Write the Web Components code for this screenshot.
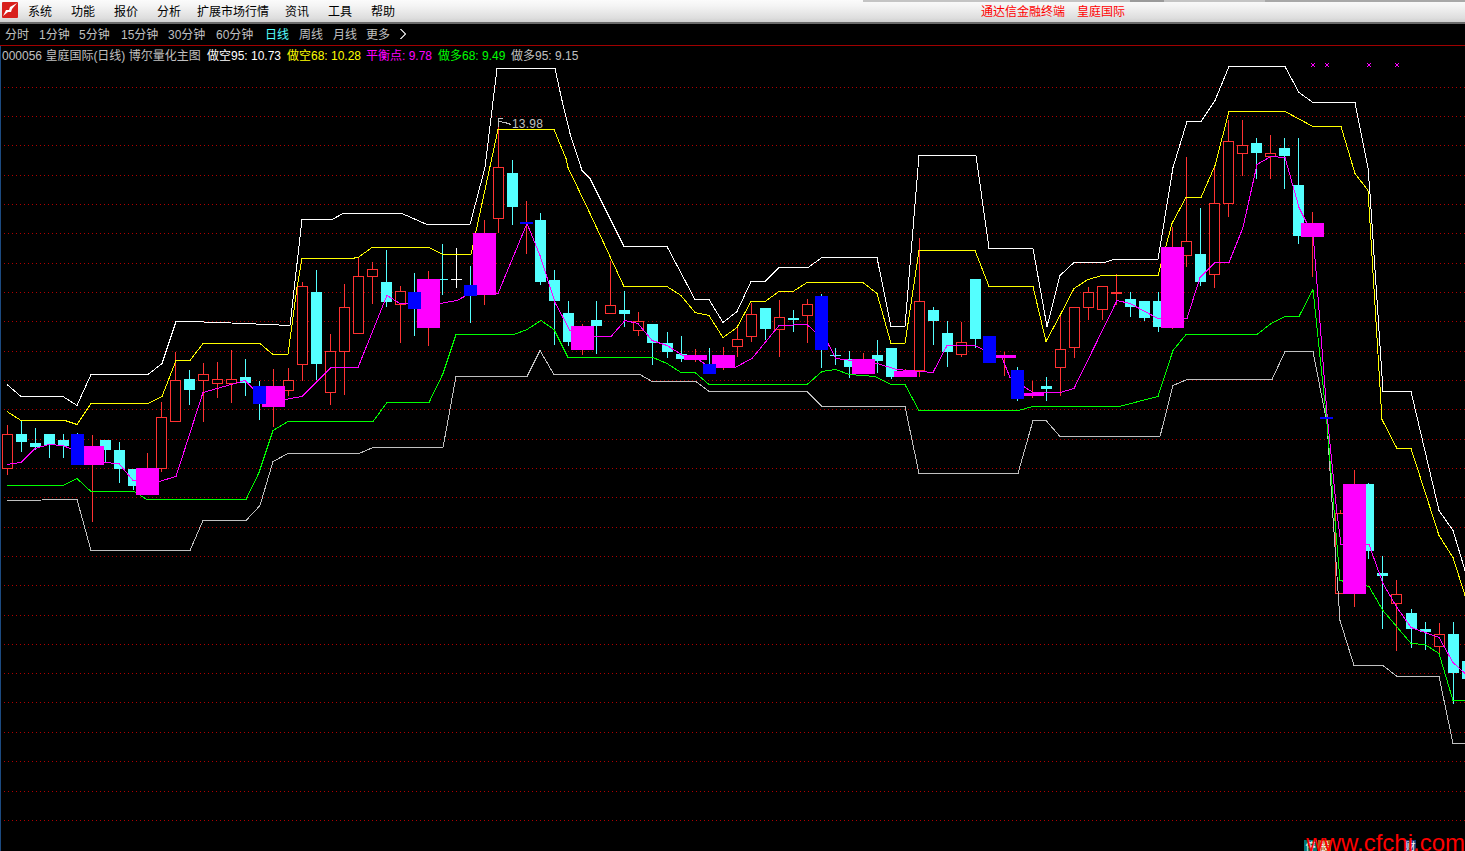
<!DOCTYPE html>
<html lang="en">
  <head>
    <meta charset="UTF-8">
    <title>皇庭国际 日线</title>
    <style>
      html, body { margin: 0; height: 100%; background: #000; overflow: hidden; }
    </style>
  </head>
  <body>
    <tdx-app>
      <tdx-menubar title-text="通达信金融终端" stock="皇庭国际">
        <tdx-menu-item w="24" gap="19">系统</tdx-menu-item>
        <tdx-menu-item w="24" gap="19">功能</tdx-menu-item>
        <tdx-menu-item w="24" gap="19">报价</tdx-menu-item>
        <tdx-menu-item w="24" gap="16">分析</tdx-menu-item>
        <tdx-menu-item w="72" gap="16">扩展市场行情</tdx-menu-item>
        <tdx-menu-item w="24" gap="19">资讯</tdx-menu-item>
        <tdx-menu-item w="24" gap="19">工具</tdx-menu-item>
        <tdx-menu-item w="24" gap="0">帮助</tdx-menu-item>
      </tdx-menubar>
      <tdx-periodbar>
        <tdx-period w="34">分时</tdx-period>
        <tdx-period w="40">1分钟</tdx-period>
        <tdx-period w="42">5分钟</tdx-period>
        <tdx-period w="47">15分钟</tdx-period>
        <tdx-period w="48">30分钟</tdx-period>
        <tdx-period w="49">60分钟</tdx-period>
        <tdx-period w="34" active>日线</tdx-period>
        <tdx-period w="34">周线</tdx-period>
        <tdx-period w="33">月线</tdx-period>
        <tdx-period w="34">更多</tdx-period>
        <tdx-period w="10"><svg width="7" height="12" viewBox="0 0 7 12" style="display:block" shape-rendering="crispEdges"><path d="M0.5 1L5.5 6L0.5 11" fill="none" stroke="#c0c0c0"/></svg></tdx-period>
      </tdx-periodbar>
      <tdx-chart>
        <tdx-legend slot="legend" color="#c0c0c0" w="205">000056 皇庭国际(日线) 博尔量化主图</tdx-legend>
        <tdx-legend slot="legend" color="#ffffff" w="80">做空95: 10.73</tdx-legend>
        <tdx-legend slot="legend" color="#ffff00" w="79">做空68: 10.28</tdx-legend>
        <tdx-legend slot="legend" color="#ff00ff" w="72">平衡点: 9.78</tdx-legend>
        <tdx-legend slot="legend" color="#00ff00" w="73">做多68: 9.49</tdx-legend>
        <tdx-legend slot="legend" color="#c0c0c0" w="80">做多95: 9.15</tdx-legend>
      </tdx-chart>
    </tdx-app>

    <script>
      const CJK = '"Liberation Sans", "Noto Sans CJK SC", sans-serif';

      class TdxApp extends HTMLElement {
        constructor() {
          super();
          this.attachShadow({ mode: 'open' });
          this.shadowRoot.innerHTML = `
            <style>
              :host { display: flex; flex-direction: column; width: 1465px; height: 851px; background: #000; overflow: hidden; position: relative; font: 12px ${CJK}; }
              .mark { position: absolute; right: 0; top: 834px; height: 17px; color: #ff0000; font: 24px/17px "Liberation Sans", sans-serif; white-space: nowrap; }
              .flag { position: absolute; top: 840px; height: 11px; color: #fff; font: 10px/11px "Noto Sans CJK SC", sans-serif; text-align: center; }
            </style>
            <slot></slot>
            <div class="flag" style="left:1304px;width:13px;background:#007a7a">停</div>
            <div class="flag" style="left:1318px;width:13px;background:#a85a10">股</div>
            <div class="flag" style="left:1405px;width:11px;background:#103c78">财</div>
            <div class="mark">www.cfchi.com</div>
          `;
        }
      }
      customElements.define('tdx-app', TdxApp);

      class TdxMenubar extends HTMLElement {
        constructor() {
          super();
          this.attachShadow({ mode: 'open' });
          this.shadowRoot.innerHTML = `
            <style>
              :host { display: block; flex: none; height: 24px; box-sizing: border-box; position: relative; border-bottom: 2px solid #6a6a6a;
                background: linear-gradient(#fbfbfb 0, #f4f4f4 6px, #dedede 18px, #cfcfcf 22px); font: 12px ${CJK}; }
              .row { display: flex; align-items: center; height: 20px; padding-left: 28px; color: #000; }
              .logo { position: absolute; left: 2px; top: 2px; width: 16px; height: 16px; }
              .right { flex: 1; display: flex; justify-content: flex-start; color: #ff0000; padding-left: 586px; gap: 12px; }
              .tab { position: absolute; top: 0; height: 2px; }
            </style>
            <svg class="logo" viewBox="0 0 16 16">
              <rect width="16" height="16" rx="1" fill="#d8201c"/>
              <path d="M15 1 L8 5 L7 8 L4 8 L1 14 L6 10 L9 10 L10 7 Z" fill="#ffffff"/>
            </svg>
            <div class="tab" style="left:863px;width:602px;background:#c4c4c4"></div>
            <div class="tab" style="left:1130px;width:34px;background:#9a9a9a"></div>
            <div class="tab" style="left:1265px;width:200px;background:#a8a8a8"></div>
            <div class="row">
              <slot></slot>
              <div class="right"><span id="t"></span><span id="s"></span></div>
            </div>
          `;
          this.shadowRoot.getElementById('t').textContent = this.getAttribute('title-text');
          this.shadowRoot.getElementById('s').textContent = this.getAttribute('stock');
        }
      }
      customElements.define('tdx-menubar', TdxMenubar);

      class TdxMenuItem extends HTMLElement {
        constructor() {
          super();
          this.attachShadow({ mode: 'open' });
          this.shadowRoot.innerHTML = `<style>:host { display: block; flex: none; white-space: nowrap; }</style><slot></slot>`;
        }
        connectedCallback() {
          this.style.width = this.getAttribute('w') + 'px';
          this.style.marginRight = this.getAttribute('gap') + 'px';
        }
      }
      customElements.define('tdx-menu-item', TdxMenuItem);

      class TdxPeriodbar extends HTMLElement {
        constructor() {
          super();
          this.attachShadow({ mode: 'open' });
          this.shadowRoot.innerHTML = `
            <style>
              :host { display: flex; flex: none; align-items: center; height: 21px; box-sizing: border-box; padding: 0 0 2px 5px; background: #000; color: #c0c0c0; font: 12px ${CJK}; }
            </style>
            <slot></slot>
          `;
        }
      }
      customElements.define('tdx-periodbar', TdxPeriodbar);

      class TdxPeriod extends HTMLElement {
        constructor() {
          super();
          this.attachShadow({ mode: 'open' });
          this.shadowRoot.innerHTML = `<style>:host { display: block; flex: none; white-space: nowrap; } :host([active]) { color: #54ffff; }</style><slot></slot>`;
        }
        connectedCallback() { this.style.width = this.getAttribute('w') + 'px'; }
      }
      customElements.define('tdx-period', TdxPeriod);

      class TdxLegend extends HTMLElement {
        constructor() {
          super();
          this.attachShadow({ mode: 'open' });
          this.shadowRoot.innerHTML = `<style>:host { display: block; flex: none; white-space: nowrap; }</style><slot></slot>`;
        }
        connectedCallback() {
          this.style.color = this.getAttribute('color');
          this.style.width = this.getAttribute('w') + 'px';
        }
      }
      customElements.define('tdx-legend', TdxLegend);

      // candles: [kind, left, bodyTop, bodyBottom, wickTop, wickBottom]
      // r = hollow red, c = filled cyan, m = wide magenta, b = blue, w = white cross
      const CANDLES = [
        ['r',2,434,469,425,475],['c',16,434,442,420,452],['c',30,443,447,428,450],['c',44,434,445,434,458],
        ['c',58,440,446,434,458],['b',71,434,465,433,465],['m',81,446,465,435,522],['c',100,440,450,440,463],
        ['c',114,450,469,442,483],['c',128,469,486,469,490],['m',136,468,495,453,495],['r',156,417,469,402,472],
        ['r',170,380,422,352,422],['c',184,379,390,370,405],['r',198,374,381,363,422],['r',212,379,384,362,398],
        ['r',226,379,384,350,403],['c',240,377,383,359,396],['b',253,386,404,381,420],['m',262,386,407,369,427],
        ['r',283,380,391,368,396],['r',297,286,365,282,381],['c',311,292,364,270,380],['r',325,351,393,334,405],
        ['r',339,307,352,284,395],['r',353,276,334,258,334],['r',367,269,277,262,304],['c',381,282,302,250,307],
        ['r',395,291,305,286,343],['b',408,292,309,273,336],['m',417,279,328,271,346],['c',437,279,280,244,295],
        ['w',451,279,280,248,288],['b',464,285,296,266,323],['m',473,233,295,220,305],['r',493,167,219,120,233],
        ['c',507,173,207,160,225],['b',520,222,224,201,254],['c',535,220,282,213,285],['c',549,280,301,270,345],
        ['c',563,313,342,301,346],['m',571,326,350,324,355],['c',591,320,326,301,354],['r',605,305,314,261,314],
        ['c',619,310,314,291,327],['r',633,321,331,312,336],['c',647,324,343,324,365],['c',662,343,352,332,358],
        ['c',676,354,359,336,362],['m',684,355,360,349,362],['b',703,364,374,348,374],['m',712,355,368,347,370],
        ['r',732,339,347,327,357],['r',746,314,337,303,342],['c',760,308,329,308,340],['r',774,317,330,300,357],
        ['c',788,318,320,310,332],['r',802,304,316,299,343],['b',815,296,350,294,368],['c',830,355,356,348,365],
        ['c',844,359,367,351,378],['m',852,359,374,353,374],['c',872,355,361,340,373],['c',886,348,377,348,379],
        ['m',894,371,377,369,377],['r',914,301,371,238,377],['c',928,310,321,307,345],['c',942,333,352,321,367],
        ['r',956,342,355,322,357],['c',970,279,339,279,348],['b',983,336,363,336,363],['m',993,355,358,352,376],
        ['b',1011,370,399,367,401],['m',1021,393,396,381,398],['c',1041,386,389,377,401],['r',1055,349,368,316,396],
        ['r',1069,307,348,307,358],['r',1083,292,308,287,320],['r',1097,286,310,286,320],['r',1111,292,294,274,305],
        ['c',1125,299,307,292,317],['c',1139,301,318,301,321],['c',1153,301,327,292,332],['m',1161,247,328,227,329],
        ['r',1181,241,256,157,267],['c',1195,254,282,208,286],['r',1209,203,275,165,288],['r',1223,141,204,120,217],
        ['r',1237,145,154,120,176],['c',1251,143,153,138,179],['r',1265,153,157,135,179],['c',1279,148,156,138,189],
        ['c',1293,185,236,138,244],['m',1301,223,237,212,277],['b',1320,417,419,417,419],['r',1335,513,594,510,594],
        ['m',1343,484,594,470,607],['c',1363,484,551,483,559],['c',1377,573,576,556,629],['r',1391,594,604,580,651],
        ['c',1406,613,629,609,648],['c',1420,629,632,622,650],['r',1434,634,647,623,657],['c',1448,634,673,622,704],
        ['c',1462,661,679,661,685]
      ];

      const LINES = {
        upper95: { color: '#ffffff', pts: [7,384,21,396,63,396,77,405,91,374,148,374,162,363,176,321,190,321,245,323,290,325,302,219,332,219,343,213,402,213,427,224,470,224,485,167,497,68,555,68,562,100,570,133,582,170,590,178,624,246,667,246,695,299,709,299,723,322,737,311,751,281,765,281,779,267,808,267,822,257,877,257,891,326,905,326,919,155,976,155,989,248,1033,248,1047,326,1060,275,1074,262,1105,262,1113,259,1158,259,1173,167,1187,121,1201,121,1215,100,1229,66,1285,66,1299,92,1313,102,1355,102,1368,167,1370,193,1383,391,1411,391,1439,510,1453,530,1465,570] },
        upper68: { color: '#ffff00', pts: [7,411,21,420,65,420,77,424,91,403,148,403,162,396,176,360,190,360,203,343,260,343,273,354,288,354,297,287,302,258,351,258,358,257,372,247,429,247,443,254,471,254,498,129,554,129,566,158,568,167,590,213,624,286,667,286,681,295,695,312,709,315,723,337,737,327,751,301,765,301,779,291,793,291,807,282,863,282,877,293,891,343,905,343,919,250,975,250,989,286,1033,286,1046,341,1060,315,1074,288,1088,279,1102,275,1158,275,1172,223,1186,197,1201,197,1215,165,1229,111,1285,111,1313,126,1341,126,1355,173,1368,190,1382,419,1397,448,1411,448,1439,535,1453,557,1465,595] },
        mid: { color: '#ff00ff', pts: [7,464,21,462,35,448,49,444,63,445,77,451,103,462,119,463,133,480,159,481,176,476,203,392,245,380,254,389,285,399,302,396,313,385,331,367,358,367,387,295,400,303,440,303,457,300,470,293,498,293,527,223,540,255,555,302,570,330,590,336,611,336,625,320,638,323,652,340,667,345,683,355,697,358,710,367,735,367,752,358,779,325,807,324,828,343,836,358,877,363,897,369,933,372,947,345,975,345,983,349,1002,357,1010,377,1033,392,1060,392,1074,388,1117,300,1130,303,1158,318,1187,318,1200,277,1215,262,1229,262,1243,227,1257,164,1271,156,1285,157,1299,207,1307,223,1313,232,1327,413,1337,513,1341,544,1369,544,1383,583,1397,607,1411,627,1439,637,1453,662,1465,673] },
        lower68: { color: '#00ff00', pts: [7,485,63,485,77,478,91,491,134,491,147,499,246,499,259,472,273,430,288,421,373,421,387,402,429,402,443,373,456,334,514,334,527,329,541,320,554,329,568,357,653,357,667,363,681,372,695,372,709,384,807,384,822,371,836,369,849,374,875,376,891,384,905,384,919,410,1018,410,1033,406,1119,406,1158,396,1173,350,1186,334,1257,334,1271,323,1285,316,1299,316,1313,289,1327,423,1333,497,1340,580,1369,586,1383,610,1411,643,1425,644,1439,653,1453,700,1465,700] },
        lower95: { color: '#c0c0c0', pts: [7,500,77,499,91,550,190,550,203,520,246,520,260,505,273,461,288,453,359,453,373,447,443,447,456,376,527,376,540,350,554,374,640,374,652,381,696,381,709,391,807,391,822,406,905,406,919,473,1018,473,1033,420,1046,420,1060,436,1160,436,1173,385,1187,379,1272,379,1285,351,1313,351,1327,423,1333,517,1340,620,1354,665,1383,665,1397,676,1439,676,1453,743,1465,743] }
      };

      const GRID = [87,116,145,175,204,233,263,292,321,351,380,409,439,468,497,527,556,585,615,644,673,702,732,761,791,820];
      const CROSSES = [1313,1327,1369,1397];

      function rect(x, y, w, h, fill) {
        return `<rect x="${x}" y="${y}" width="${w}" height="${h}" fill="${fill}"/>`;
      }
      function vline(x, y1, y2, color) {
        return y2 > y1 ? rect(x, y1, 1, y2 - y1, color) : '';
      }

      class TdxChart extends HTMLElement {
        constructor() {
          super();
          this.attachShadow({ mode: 'open' });
          this.shadowRoot.innerHTML = `
            <style>
              :host { display: block; flex: 1; position: relative; background: #000; border-top: 1px solid #a00000; box-sizing: border-box; font: 12px ${CJK}; }
              .legend { display: flex; align-items: center; height: 16px; padding-left: 2px; position: relative; }
              svg { position: absolute; left: 0; top: -46px; width: 1465px; height: 851px; }
              .edge { position: absolute; left: 0; top: 0; bottom: 0; width: 1px; background: #1c4a80; }
              .hi { position: absolute; left: 512px; top: 71px; color: #c0c0c0; font: 12px "Liberation Sans", sans-serif; letter-spacing: .2px; }
            </style>
            <svg id="plot" viewBox="0 0 1465 851" shape-rendering="crispEdges"></svg>
            <div class="legend"><slot name="legend"></slot></div>
            <div class="hi">13.98</div>
            <div class="edge"></div>
          `;
          this.shadowRoot.getElementById('plot').innerHTML = this.plot();
        }

        plot() {
          let out = '';
          // dotted price grid
          for (const y of GRID) {
            out += `<line x1="0" x2="1465" y1="${y + .5}" y2="${y + .5}" stroke="#b00000" stroke-dasharray="1 3"/>`;
          }
          // plain candles go under the band lines, the wide boxes over them
          let over = '';
          for (const [k, l, t, b, wt, wb] of CANDLES) {
            if (k == 'r') {
              out += vline(l + 5, wt, t, '#ff3232') + vline(l + 5, b, wb, '#ff3232');
              out += `<rect x="${l + .5}" y="${t + .5}" width="10" height="${b - t - 1}" fill="#000" stroke="#ff3232"/>`;
            } else if (k == 'c') {
              out += vline(l + 5, wt, wb, '#54ffff') + rect(l, t, 11, b - t, '#54ffff');
            } else if (k == 'w') {
              out += vline(l + 5, wt, wb, '#ffffff') + rect(l, t, 11, b - t, '#ffffff');
            } else if (k == 'm') {
              out += vline(l + 11, wt, wb, '#ff3232');
              over = rect(l, t, 23, b - t, '#ff00ff') + over;
            } else {
              // blue boxes sit on top of the magenta ones
              out += vline(l + 6, wt, wb, t > 200 && b - t < 4 ? '#ff3232' : '#54ffff');
              over += rect(l, t, 13, b - t, '#0000ff');
            }
          }
          for (const name of ['upper95', 'upper68', 'lower95', 'lower68', 'mid']) {
            const pts = LINES[name].pts;
            let p = '';
            for (let i = 0; i < pts.length; i += 2) p += pts[i] + ',' + (pts[i + 1] + .5) + ' ';
            out += `<polyline points="${p}" fill="none" stroke="${LINES[name].color}" stroke-width="1"/>`;
          }
          out += over;
          // marker on the high price
          out += `<path d="M498.5 127V118.5H503M498.5 121.5L505 122.5L511 124.5" fill="none" stroke="#c0c0c0"/>`;
          for (const x of CROSSES) {
            out += `<path d="M${x - 2} 63L${x + 2} 67M${x - 2} 67L${x + 2} 63" stroke="#ff00ff" fill="none"/>`;
          }
          return out;
        }
      }
      customElements.define('tdx-chart', TdxChart);
    </script>
  </body>
</html>
